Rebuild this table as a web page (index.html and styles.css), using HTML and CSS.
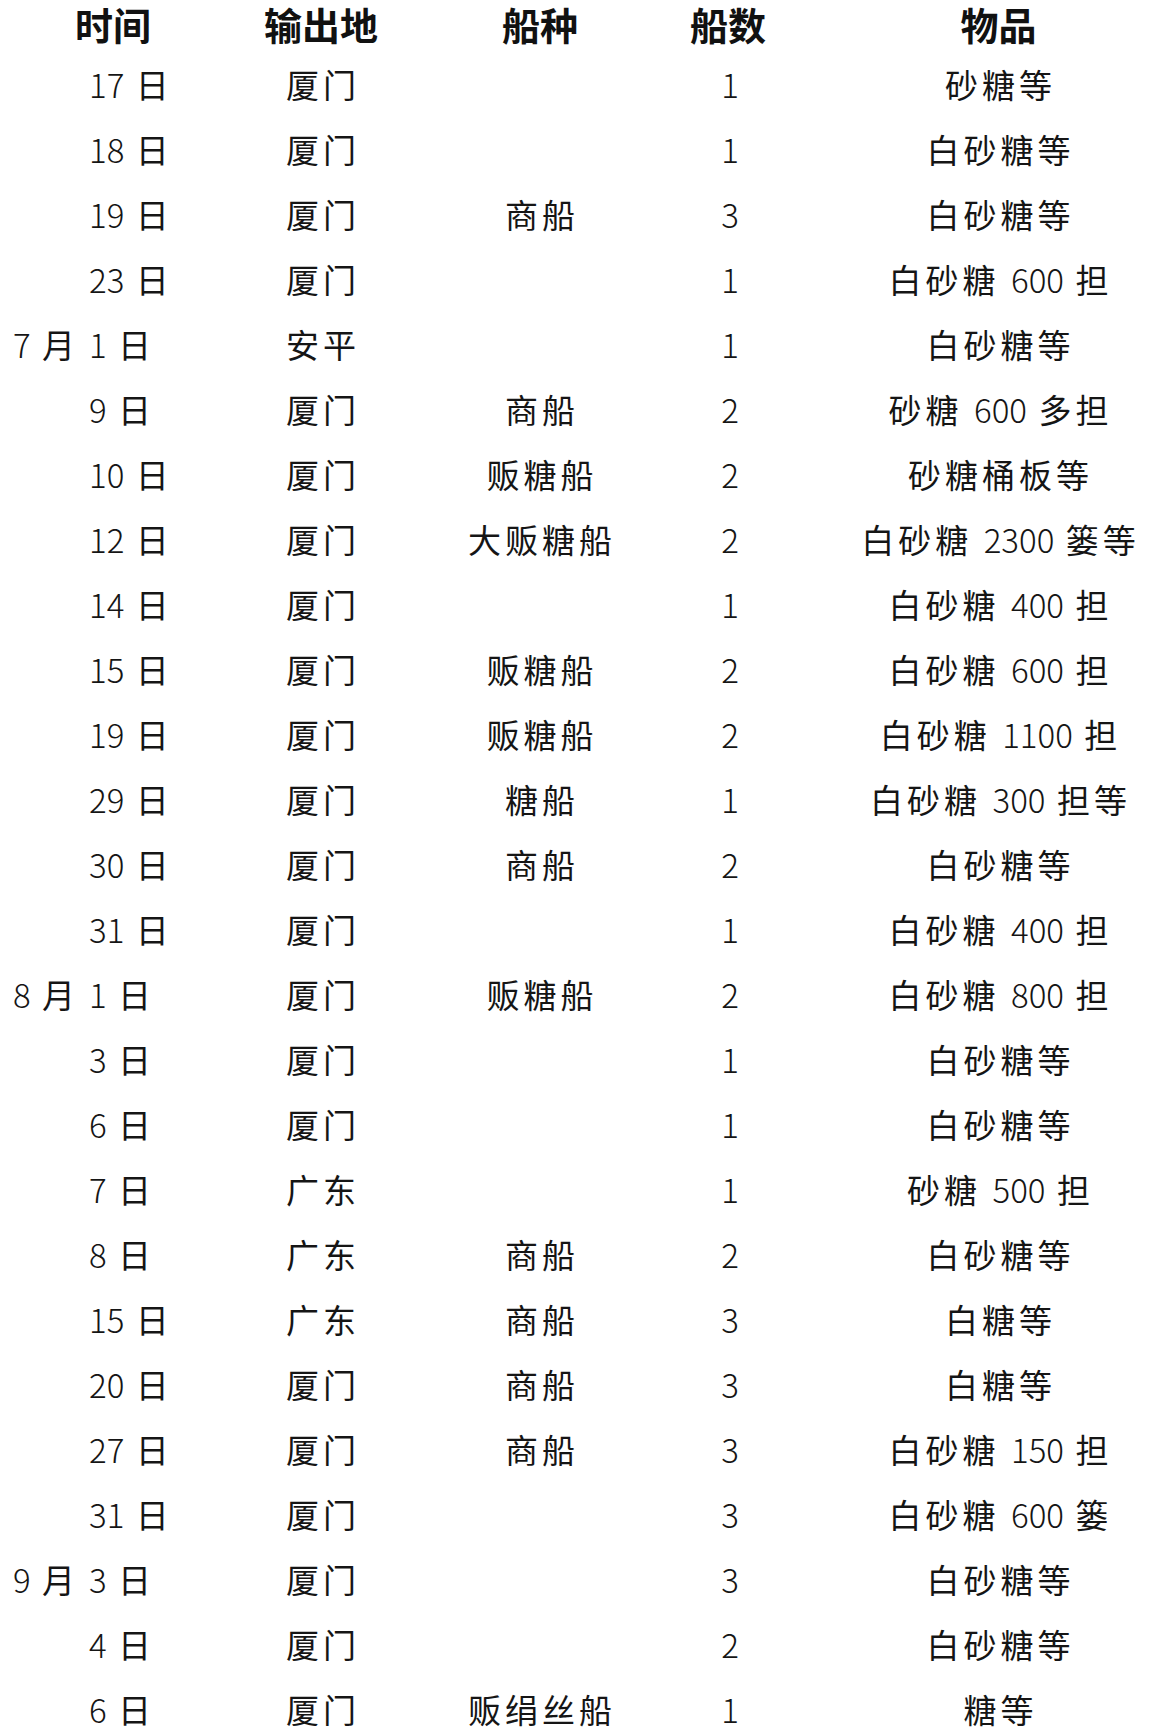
FILE: index.html
```html
<!DOCTYPE html>
<html lang="zh-CN">
<head>
<meta charset="utf-8">
<title>船只输出表</title>
<link rel="stylesheet" href="styles.css">
</head>
<body>
<div class="table">
  <div class="row head">
    <div class="c1h">时间</div><div class="c2">输出地</div><div class="c3">船种</div><div class="c4">船数</div><div class="c5">物品</div>
  </div>
  <div class="row"><div class="c1"><span class="mon"></span><span class="day"><span class="n">17</span> 日</span></div><div class="c2">厦门</div><div class="c3"></div><div class="c4"><span class="n">1</span></div><div class="c5">砂糖等</div></div>
  <div class="row"><div class="c1"><span class="mon"></span><span class="day"><span class="n">18</span> 日</span></div><div class="c2">厦门</div><div class="c3"></div><div class="c4"><span class="n">1</span></div><div class="c5">白砂糖等</div></div>
  <div class="row"><div class="c1"><span class="mon"></span><span class="day"><span class="n">19</span> 日</span></div><div class="c2">厦门</div><div class="c3">商船</div><div class="c4"><span class="n">3</span></div><div class="c5">白砂糖等</div></div>
  <div class="row"><div class="c1"><span class="mon"></span><span class="day"><span class="n">23</span> 日</span></div><div class="c2">厦门</div><div class="c3"></div><div class="c4"><span class="n">1</span></div><div class="c5">白砂糖 <span class="n">600</span> 担</div></div>
  <div class="row"><div class="c1"><span class="mon"><span class="n">7</span> 月</span><span class="day"><span class="n">1</span> 日</span></div><div class="c2">安平</div><div class="c3"></div><div class="c4"><span class="n">1</span></div><div class="c5">白砂糖等</div></div>
  <div class="row"><div class="c1"><span class="mon"></span><span class="day"><span class="n">9</span> 日</span></div><div class="c2">厦门</div><div class="c3">商船</div><div class="c4"><span class="n">2</span></div><div class="c5">砂糖 <span class="n">600</span> 多担</div></div>
  <div class="row"><div class="c1"><span class="mon"></span><span class="day"><span class="n">10</span> 日</span></div><div class="c2">厦门</div><div class="c3">贩糖船</div><div class="c4"><span class="n">2</span></div><div class="c5">砂糖桶板等</div></div>
  <div class="row"><div class="c1"><span class="mon"></span><span class="day"><span class="n">12</span> 日</span></div><div class="c2">厦门</div><div class="c3">大贩糖船</div><div class="c4"><span class="n">2</span></div><div class="c5">白砂糖 <span class="n">2300</span> 篓等</div></div>
  <div class="row"><div class="c1"><span class="mon"></span><span class="day"><span class="n">14</span> 日</span></div><div class="c2">厦门</div><div class="c3"></div><div class="c4"><span class="n">1</span></div><div class="c5">白砂糖 <span class="n">400</span> 担</div></div>
  <div class="row"><div class="c1"><span class="mon"></span><span class="day"><span class="n">15</span> 日</span></div><div class="c2">厦门</div><div class="c3">贩糖船</div><div class="c4"><span class="n">2</span></div><div class="c5">白砂糖 <span class="n">600</span> 担</div></div>
  <div class="row"><div class="c1"><span class="mon"></span><span class="day"><span class="n">19</span> 日</span></div><div class="c2">厦门</div><div class="c3">贩糖船</div><div class="c4"><span class="n">2</span></div><div class="c5">白砂糖 <span class="n">1100</span> 担</div></div>
  <div class="row"><div class="c1"><span class="mon"></span><span class="day"><span class="n">29</span> 日</span></div><div class="c2">厦门</div><div class="c3">糖船</div><div class="c4"><span class="n">1</span></div><div class="c5">白砂糖 <span class="n">300</span> 担等</div></div>
  <div class="row"><div class="c1"><span class="mon"></span><span class="day"><span class="n">30</span> 日</span></div><div class="c2">厦门</div><div class="c3">商船</div><div class="c4"><span class="n">2</span></div><div class="c5">白砂糖等</div></div>
  <div class="row"><div class="c1"><span class="mon"></span><span class="day"><span class="n">31</span> 日</span></div><div class="c2">厦门</div><div class="c3"></div><div class="c4"><span class="n">1</span></div><div class="c5">白砂糖 <span class="n">400</span> 担</div></div>
  <div class="row"><div class="c1"><span class="mon"><span class="n">8</span> 月</span><span class="day"><span class="n">1</span> 日</span></div><div class="c2">厦门</div><div class="c3">贩糖船</div><div class="c4"><span class="n">2</span></div><div class="c5">白砂糖 <span class="n">800</span> 担</div></div>
  <div class="row"><div class="c1"><span class="mon"></span><span class="day"><span class="n">3</span> 日</span></div><div class="c2">厦门</div><div class="c3"></div><div class="c4"><span class="n">1</span></div><div class="c5">白砂糖等</div></div>
  <div class="row"><div class="c1"><span class="mon"></span><span class="day"><span class="n">6</span> 日</span></div><div class="c2">厦门</div><div class="c3"></div><div class="c4"><span class="n">1</span></div><div class="c5">白砂糖等</div></div>
  <div class="row"><div class="c1"><span class="mon"></span><span class="day"><span class="n">7</span> 日</span></div><div class="c2">广东</div><div class="c3"></div><div class="c4"><span class="n">1</span></div><div class="c5">砂糖 <span class="n">500</span> 担</div></div>
  <div class="row"><div class="c1"><span class="mon"></span><span class="day"><span class="n">8</span> 日</span></div><div class="c2">广东</div><div class="c3">商船</div><div class="c4"><span class="n">2</span></div><div class="c5">白砂糖等</div></div>
  <div class="row"><div class="c1"><span class="mon"></span><span class="day"><span class="n">15</span> 日</span></div><div class="c2">广东</div><div class="c3">商船</div><div class="c4"><span class="n">3</span></div><div class="c5">白糖等</div></div>
  <div class="row"><div class="c1"><span class="mon"></span><span class="day"><span class="n">20</span> 日</span></div><div class="c2">厦门</div><div class="c3">商船</div><div class="c4"><span class="n">3</span></div><div class="c5">白糖等</div></div>
  <div class="row"><div class="c1"><span class="mon"></span><span class="day"><span class="n">27</span> 日</span></div><div class="c2">厦门</div><div class="c3">商船</div><div class="c4"><span class="n">3</span></div><div class="c5">白砂糖 <span class="n">150</span> 担</div></div>
  <div class="row"><div class="c1"><span class="mon"></span><span class="day"><span class="n">31</span> 日</span></div><div class="c2">厦门</div><div class="c3"></div><div class="c4"><span class="n">3</span></div><div class="c5">白砂糖 <span class="n">600</span> 篓</div></div>
  <div class="row"><div class="c1"><span class="mon"><span class="n">9</span> 月</span><span class="day"><span class="n">3</span> 日</span></div><div class="c2">厦门</div><div class="c3"></div><div class="c4"><span class="n">3</span></div><div class="c5">白砂糖等</div></div>
  <div class="row"><div class="c1"><span class="mon"></span><span class="day"><span class="n">4</span> 日</span></div><div class="c2">厦门</div><div class="c3"></div><div class="c4"><span class="n">2</span></div><div class="c5">白砂糖等</div></div>
  <div class="row"><div class="c1"><span class="mon"></span><span class="day"><span class="n">6</span> 日</span></div><div class="c2">厦门</div><div class="c3">贩绢丝船</div><div class="c4"><span class="n">1</span></div><div class="c5">糖等</div></div>
</div>
</body>
</html>
```

FILE: styles.css
```css
html, body {
  margin: 0;
  padding: 0;
  background: #ffffff;
  overflow: hidden;
}

body {
  font-family: "Noto Sans CJK SC", "Noto Sans", sans-serif;
  color: #151515;
}

.table {
  display: flex;
  flex-direction: column;
}

.row {
  display: grid;
  grid-template-columns: 226px 190px 248px 128px 1fr;
  height: 65px;
  align-items: center;
  font-size: 33px;
  letter-spacing: 4px;
  line-height: 1.2;
  white-space: nowrap;
}

.row.head {
  box-sizing: border-box;
  height: 52px;
  padding-top: 5px;
  font-size: 38px;
  font-weight: 700;
  letter-spacing: 0;
  line-height: 38px;
  color: #111111;
  align-items: start;
}

.c1h, .c2, .c3, .c4 {
  text-align: center;
}

.row .c2, .row .c3, .row .c4 {
  padding-left: 4px;
}

.row.head .c2, .row.head .c3, .row.head .c4 {
  padding-left: 0;
}

.c5 {
  text-align: center;
  padding-left: 58px;
}

.row.head .c5 {
  padding-left: 54px;
}

.c1 {
  display: flex;
  align-items: center;
}

.mon {
  display: inline-block;
  width: 76px;
  margin-left: 13px;
}

.day {
  display: inline-block;
}

.n {
  letter-spacing: 0;
  font-weight: 300;
}
```
